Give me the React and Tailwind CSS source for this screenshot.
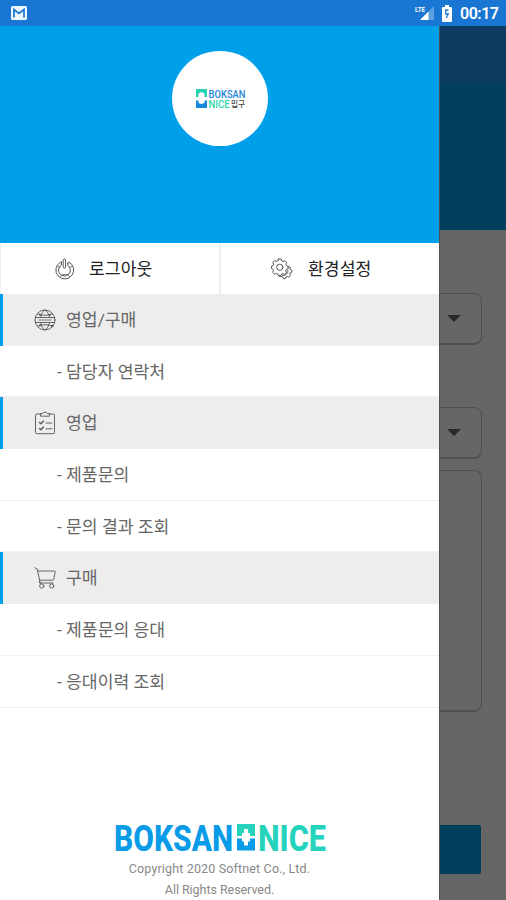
import React from 'react';

const iconProps = {
  fill: 'none',
  stroke: 'currentColor',
  strokeWidth: 0.9,
  strokeLinecap: 'round',
  strokeLinejoin: 'round',
};

function PowerIcon() {
  return (
    <svg className="w-5 h-[22px] text-[#444]" viewBox="0 0 20 22" {...iconProps}>
      <path d="M8.2 2C8.2.6 10.600.6 10.600 2v7.200c0 1.300-2.400 1.300-2.400 0z" />
      <path d="M6.500 4L5.300 4.300A8.900 8.900 0 1 0 13.700 4L12.800 5.500M6.500 4v3A5.900 5.900 0 1 0 12.800 7.300V5.500" />
      <path d="M5.500 18.500l2-2h5l2 2M2.800 8L5 9.500M17.200 8L15 9.500" strokeWidth=".7" />
    </svg>
  );
}

function GearsIcon() {
  return (
    <svg className="w-[22px] h-[22px] text-[#444]" viewBox="0 0 22 22" {...iconProps}>
      <path d="M7.3 1h2.9l.5 1.9 1.4.7 1.8-1 1.8 1.9-.9 1.8.6 1.4 1.7.7v2.5l-1.9.6-.6 1.3.9 1.8-1.9 1.8-1.8-.9-1.3.6-.6 1.6H7.4l-.7-1.8-1.4-.6-1.8.9-1.9-1.9.9-1.7-.6-1.4-1.4-.6V8.2l1.6-.6.6-1.4-.9-1.8 1.9-1.8 1.7.9 1.4-.6z" />
      <circle cx="8.8" cy="9.2" r="3.1" />
      <path d="M17.5 8.5l1.7.8-.2 1.8 1.9 1v2l-1.7.7-.4 1.4.8 1.5-1.7 1.5-1.5-.8-1.3.5-.8 1.7h-2l-.7-1.7-1.5-.5-1.1.5-1.2-1.5" />
      <path d="M17 12.5a4.5 4.5 0 0 1-5.500 5" />
    </svg>
  );
}

function GlobeIcon() {
  return (
    <svg className="w-[22px] h-[22px] text-[#555]" viewBox="0 0 22 22" {...iconProps}>
      <circle cx="11" cy="11" r="10" />
      <path d="M6.500 8.500C7 5 9.500 1.500 11 1.200c1.500.3 4 3.800 4.500 7.300M6.500 13.500c.5 3.500 3 7 4.500 7.300 1.500-.3 4-3.800 4.500-7.300" />
      <path d="M3.500 4.800c4.500 2 10.500 2 15 0M3.500 17.200c4.500-2 10.500-2 15 0M1.300 8.500h19.400M1.300 13.500h19.400" />
      <path d="M5 11h12" strokeWidth=".8" />
      <g fill="currentColor" stroke="none">
        <circle cx="6" cy="5.700" r="1" />
        <circle cx="16" cy="5.700" r="1" />
        <circle cx="6" cy="16.200" r="1" />
        <circle cx="18.300" cy="16.900" r="1.200" />
      </g>
    </svg>
  );
}

function ClipboardIcon() {
  return (
    <svg className="w-[22px] h-6 text-[#555]" viewBox="0 0 22 24" {...iconProps}>
      <path d="M6.5 3H2.8Q1.5 3 1.5 4.3v17Q1.5 22.700 2.8 22.700h16.400q1.300 0 1.300-1.400v-17Q20.500 3 19.200 3h-3.700" />
      <path d="M6.5 4.8V2.500h2.300C9 .6 13 .6 13.300 2.500h2.200v2.300z" />
      <path d="M5.500 11.500l1.400 1.300L9.500 10M5.500 17.500l1.400 1.300L9.500 16" strokeWidth="1.3" />
      <path d="M12 12h6M12 17.800h6" />
    </svg>
  );
}

function CartIcon() {
  return (
    <svg className="w-[22px] h-[22px] text-[#555]" viewBox="0 0 22 22" {...iconProps}>
      <path d="M.8.8l2.500 1.200 2.900 14h13" />
      <path d="M4 4h16.300q1.200 0 .9 1.200l-1.500 7q-.2 1-1.300 1H5.800" />
      <path d="M6.500 16.500q-1.400 0-1.200-1.500" />
      <circle cx="7.700" cy="19" r="2.100" />
      <circle cx="17.700" cy="19" r="2.100" />
    </svg>
  );
}

const menu = [
  { title: '영업/구매', icon: <GlobeIcon />, items: ['담당자 연락처'] },
  { title: '영업', icon: <ClipboardIcon />, items: ['제품문의', '문의 결과 조회'] },
  { title: '구매', icon: <CartIcon />, items: ['제품문의 응대', '응대이력 조회'] },
];

function StatusBar() {
  return (
    <div className="h-[26px] shrink-0 bg-[#1976d2] flex items-center justify-between pl-[11px] pr-2 text-white">
      <svg className="w-4 h-[14px]" viewBox="0 0 16 14">
        <rect width="16" height="14" rx="1.5" fill="#edf6fd" />
        <path d="M3 11.500V3.500L8 7.500l5-4v8" fill="none" stroke="#1976d2" strokeWidth="1.7" />
      </svg>
      <div className="flex items-center">
        <svg className="w-5 h-4 overflow-visible" viewBox="0 0 20 16">
          <path d="M19 1v14H5z" fill="#5da0e2" />
          <path d="M13.500 6.500V15H5z" fill="#fff" />
          <text x="0" y="6.500" fontSize="8" fontWeight="700" fill="#fff" textLength="10" lengthAdjust="spacingAndGlyphs">LTE</text>
        </svg>
        <svg className="w-[10px] h-[17px] ml-[7px]" viewBox="0 0 10 17">
          <path d="M3 0h4v2h2q1 0 1 1v13q0 1-1 1H1q-1 0-1-1V3q0-1 1-1h2z" fill="#fff" />
          <path d="M6.500 5H3.700v4h2.600L4.300 13" fill="none" stroke="#1976d2" strokeWidth="1.3" />
        </svg>
        <span className="ml-[8px] pt-px text-[16px] leading-[25px] font-semibold w-[38px] whitespace-nowrap tracking-[-0.5px]">00:17</span>
      </div>
    </div>
  );
}

function ProfileLogo() {
  return (
    <svg className="w-[50px] h-5 overflow-visible" viewBox="0 0 50 20" fontWeight="500">
      <path d="M0 0h11v8H8.500V4.500L5.500 3l-3 1.500V8H0z" fill="#25d3b4" />
      <path d="M0 11.500h2.500V14l3 1 3-1v-2.500H11V19H0z" fill="#1688dc" />
      <text x="12.500" y="8.500" fontSize="11.500" fill="#2385d5" textLength="37" lengthAdjust="spacingAndGlyphs">BOKSAN</text>
      <text x="12.500" y="19" fontSize="11.500" fill="#2bd6a5" textLength="21" lengthAdjust="spacingAndGlyphs">NICE</text>
      <text x="35" y="17.500" fontSize="8" fill="#444" textLength="14" lengthAdjust="spacingAndGlyphs">밉구</text>
    </svg>
  );
}

function FooterLogo() {
  return (
    <svg className="w-[214px] h-[29px] overflow-visible" viewBox="0 0 214 29" fontWeight="800" fontSize="37">
      <text x="1" y="28.500" fill="#079be8" textLength="119" lengthAdjust="spacingAndGlyphs">BOKSAN</text>
      <path d="M124 2h18v12h-5v-3h-2V7h-4v4h-2v3h-5z" fill="#25d3bc" />
      <path d="M124 16.500h5v3h2v4h4v-4h2v-3h5v12h-18z" fill="#079be8" />
      <text x="145" y="28.500" fill="#25d3bc" textLength="68" lengthAdjust="spacingAndGlyphs">NICE</text>
    </svg>
  );
}

function Drawer() {
  return (
    <div className="w-[439px] shrink-0 bg-white flex flex-col">
      <div className="h-[217px] shrink-0 bg-[#009fe9] flex justify-center pt-[25px]">
        <div className="w-24 h-[95px] rounded-full bg-white flex items-center justify-center pl-[2px]">
          <ProfileLogo />
        </div>
      </div>

      <div className="h-[51px] shrink-0 flex text-[17.2px] text-[#222]">
        <button className="w-[221px] flex items-center pl-[54px] gap-[14px] border-l border-r-2 border-[#f0f0f0]">
          <PowerIcon />
          <span className="pt-[3px]">로그아웃</span>
        </button>
        <button className="flex-1 flex items-center pl-[50px] gap-[15px]">
          <GearsIcon />
          <span className="pt-[3px]">환경설정</span>
        </button>
      </div>

      {menu.map((section) => (
        <div key={section.title} className="text-[17.2px] text-[#666]">
          <div className="h-[51.7px] bg-[#ededed] border-l-[3px] border-[#009fe9] flex items-center pl-[31px] gap-[10px]">
            {section.icon}
            <span className="pt-[2px]">{section.title}</span>
          </div>
          {section.items.map((item) => (
            <div key={item} className="h-[51.7px] border-b border-[#f1f1f1] flex items-center pl-[57px] pt-[3px]">
              <span className="w-[9px]">-</span>
              <span>{item}</span>
            </div>
          ))}
        </div>
      ))}

      <div className="mt-auto flex flex-col items-center text-[12.5px] leading-[21px] text-[#888]">
        <FooterLogo />
        <p className="mt-[7px] tracking-[0.15px]">Copyright 2020 Softnet Co., Ltd.</p>
        <p className="tracking-[-0.05px]">All Rights Reserved.</p>
      </div>
    </div>
  );
}

function SelectBox() {
  return (
    <div className="h-[52px] w-[42px] border border-l-0 border-b-2 border-[#505050] rounded-r-[8px] flex items-center pl-[7px]">
      <svg className="w-[14px] h-[7px]" viewBox="0 0 14 7">
        <path d="M0 0h14L7 7z" fill="#292929" />
      </svg>
    </div>
  );
}

// visible part of the page under the open drawer
function DimmedPage() {
  return (
    <div className="flex-1 bg-[#666] flex flex-col border-l border-[#505050]">
      <div className="h-[57px] shrink-0 bg-[#0d3b61]" />
      <div className="h-[147px] shrink-0 bg-[#00405d]" />
      <div className="mt-[63px]">
        <SelectBox />
      </div>
      <div className="mt-[62px]">
        <SelectBox />
      </div>
      <div className="mt-[11px] h-[242px] w-[42px] border border-l-0 border-b-2 border-[#505050] rounded-r-[8px]" />
      <div className="mt-[113px] h-[49px] w-[41px] bg-[#00405d] rounded-r-[2px]" />
    </div>
  );
}

function App() {
  return (
    <div className="w-[506px] h-[900px] overflow-hidden flex flex-col font-[family-name:Roboto,'Noto_Sans_CJK_KR',sans-serif]">
      <StatusBar />
      <div className="flex-1 flex min-h-0">
        <Drawer />
        <DimmedPage />
      </div>
    </div>
  );
}

export default App;
